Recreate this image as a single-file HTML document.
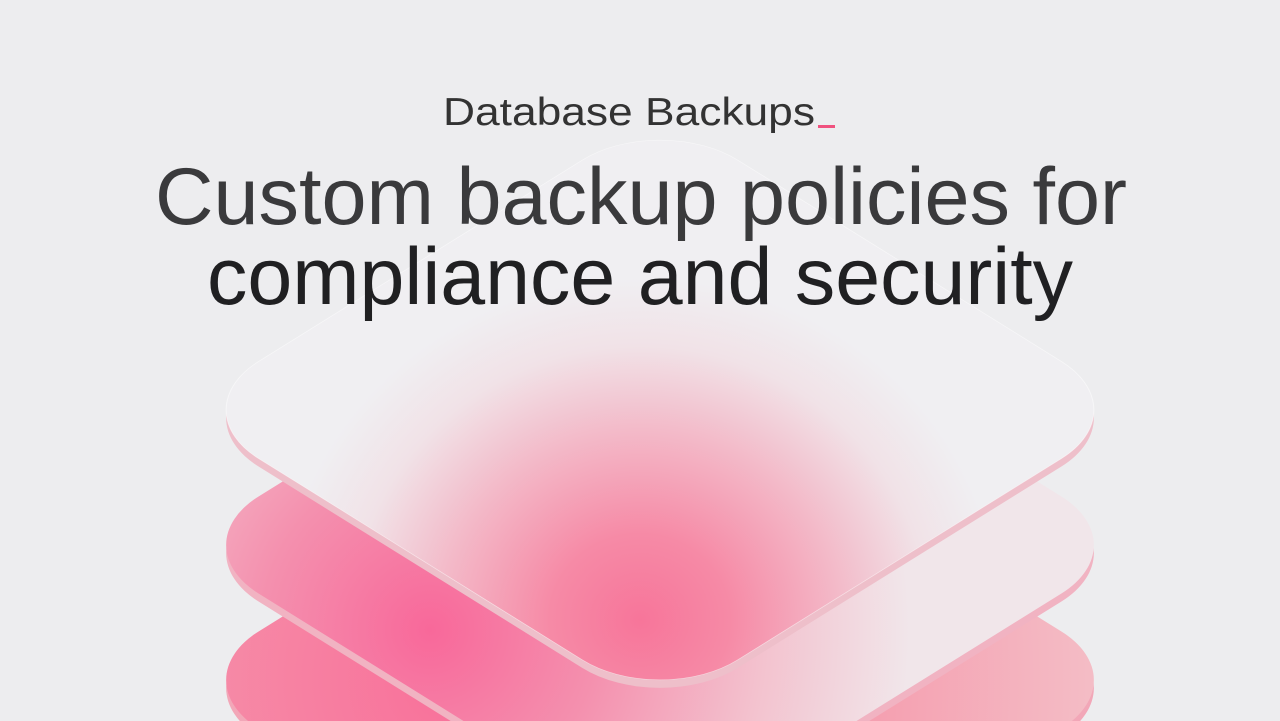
<!DOCTYPE html>
<html><head><meta charset="utf-8"><style>
html,body{margin:0;padding:0;background:#ededef;overflow:hidden;}
body{width:1280px;height:721px;position:relative;}
svg{position:absolute;left:0;top:0;display:block;}
</style></head><body>
<svg width="1280" height="721" viewBox="0 0 1280 721">
<defs>
  <clipPath id="d1"><rect x="-339" y="-339" width="678" height="678" rx="110" transform="translate(660,410) scale(1,0.622) rotate(45)"/></clipPath>
  <clipPath id="d2"><rect x="-339" y="-339" width="678" height="678" rx="110" transform="translate(660,545) scale(1,0.622) rotate(45)"/></clipPath>
  <clipPath id="d3"><rect x="-339" y="-339" width="678" height="678" rx="110" transform="translate(660,680) scale(1,0.622) rotate(45)"/></clipPath>
  <radialGradient id="g1" gradientUnits="userSpaceOnUse" cx="640" cy="620" r="360" gradientTransform="translate(640,620) scale(1,0.95) translate(-640,-620)">
    <stop offset="0" stop-color="#f7759a"/>
    <stop offset="0.25" stop-color="#f68aa6"/>
    <stop offset="0.55" stop-color="#f3b9c8"/>
    <stop offset="0.8" stop-color="#f1e2e7"/>
    <stop offset="1" stop-color="#f0eff2"/>
  </radialGradient>
  <radialGradient id="g2" gradientUnits="userSpaceOnUse" cx="430" cy="630" r="480">
    <stop offset="0" stop-color="#f8689a"/>
    <stop offset="0.35" stop-color="#f490ae"/>
    <stop offset="0.7" stop-color="#f3c3cf"/>
    <stop offset="1" stop-color="#f1e6ea"/>
  </radialGradient>
  <radialGradient id="g3" gradientUnits="userSpaceOnUse" cx="450" cy="680" r="700">
    <stop offset="0" stop-color="#f8709a"/>
    <stop offset="0.6" stop-color="#f59fb0"/>
    <stop offset="1" stop-color="#f4c4cb"/>
  </radialGradient>
</defs>
<!-- layer 3 -->
<rect x="-339" y="-339" width="678" height="678" rx="110" transform="translate(660,688) scale(1,0.622) rotate(45)" fill="#f2a7b8"/>
<g clip-path="url(#d3)"><rect width="1280" height="721" fill="url(#g3)"/></g>
<!-- layer 2 -->
<rect x="-339" y="-339" width="678" height="678" rx="110" transform="translate(660,553) scale(1,0.622) rotate(45)" fill="#f1b3c2"/>
<g clip-path="url(#d2)"><rect width="1280" height="721" fill="url(#g2)"/></g>
<!-- layer 1 -->
<rect x="-339" y="-339" width="678" height="678" rx="110" transform="translate(660,418) scale(1,0.622) rotate(45)" fill="#eebfca"/>
<g clip-path="url(#d1)"><rect width="1280" height="721" fill="url(#g1)"/></g>
<rect x="-339" y="-339" width="678" height="678" rx="110" transform="translate(660,410) scale(1,0.622) rotate(45)" fill="none" stroke="#ffffff" stroke-opacity="0.5" stroke-width="1"/>

<text x="443" y="125" font-family="Liberation Sans, sans-serif" font-size="39" fill="#333" textLength="372" lengthAdjust="spacingAndGlyphs">Database Backups</text>
<rect x="818" y="125" width="17" height="3" fill="#f0527f"/>
<text x="155" y="224" font-family="Liberation Sans, sans-serif" font-size="81" fill="#3a3a3c" textLength="972" lengthAdjust="spacingAndGlyphs">Custom backup policies for</text>
<text x="207" y="304" font-family="Liberation Sans, sans-serif" font-size="81" fill="#202022" textLength="866" lengthAdjust="spacingAndGlyphs">compliance and security</text>
</svg>
</body></html>
